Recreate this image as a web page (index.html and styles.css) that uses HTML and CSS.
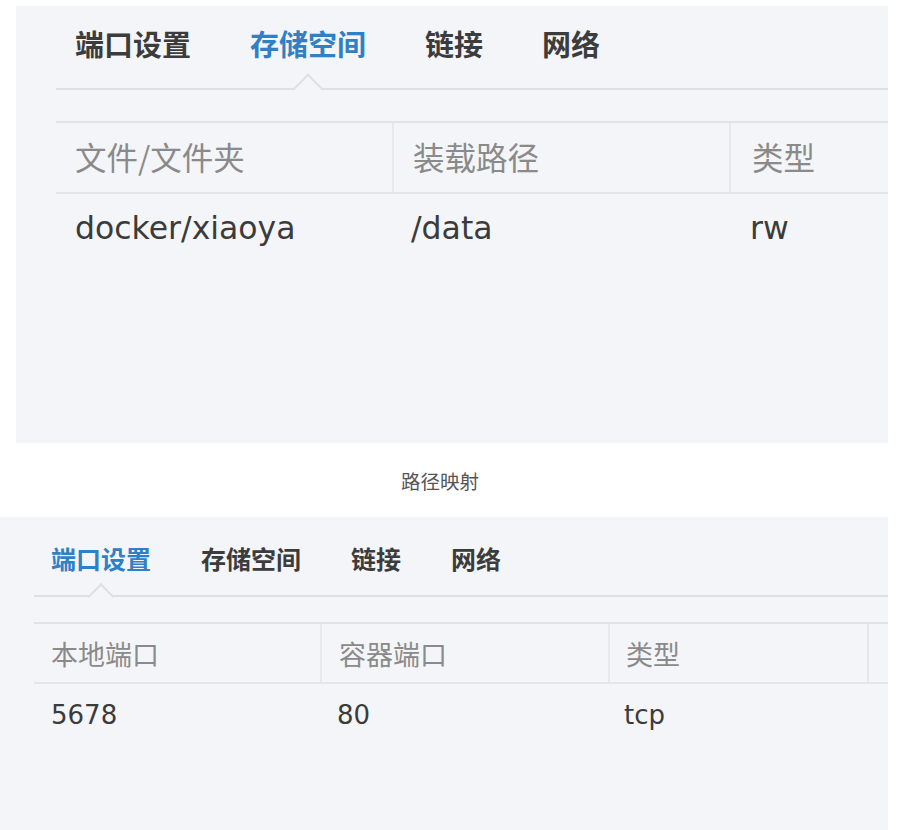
FILE: index.html
```html
<!DOCTYPE html>
<html lang="zh-CN">
<head>
<meta charset="utf-8">
<title>路径映射</title>
<link rel="stylesheet" href="styles.css">
</head>
<body>
<div class="page">
  <section class="panel panel-top">
    <nav class="tabs">
      <span class="tab">端口设置</span>
      <span class="tab active">存储空间</span>
      <span class="tab">链接</span>
      <span class="tab">网络</span>
    </nav>
    <div class="table">
      <div class="row head">
        <div class="cell">文件/文件夹</div>
        <div class="cell">装载路径</div>
        <div class="cell">类型</div>
      </div>
      <div class="row data">
        <div class="cell">docker/xiaoya</div>
        <div class="cell">/data</div>
        <div class="cell">rw</div>
      </div>
    </div>
  </section>

  <div class="caption">路径映射</div>

  <section class="panel panel-bottom">
    <nav class="tabs">
      <span class="tab active">端口设置</span>
      <span class="tab">存储空间</span>
      <span class="tab">链接</span>
      <span class="tab">网络</span>
    </nav>
    <div class="table">
      <div class="row head">
        <div class="cell">本地端口</div>
        <div class="cell">容器端口</div>
        <div class="cell">类型</div>
        <div class="cell"></div>
      </div>
      <div class="row data">
        <div class="cell">5678</div>
        <div class="cell">80</div>
        <div class="cell">tcp</div>
        <div class="cell"></div>
      </div>
    </div>
  </section>
</div>
</body>
</html>
```

FILE: styles.css
```css
* { box-sizing: border-box; }

html, body {
  margin: 0;
  padding: 0;
  background: #ffffff;
}

body {
  font-family: "DejaVu Sans", "Noto Sans CJK SC", sans-serif;
  color: #3a3a3a;
  width: 898px;
  height: 830px;
  overflow: hidden;
}

.page {
  display: flex;
  flex-direction: column;
}

.panel {
  background: #f4f5f8;
}

/* ---------- top screenshot ---------- */
.panel-top {
  margin: 6px 10px 0 16px;
  height: 437px;
  padding-left: 40px;
}

.tabs {
  display: flex;
  border-bottom: 2px solid #dcdfe4;
}

.tab {
  position: relative;
  font-family: "Noto Sans CJK SC", sans-serif;
  font-weight: 700;
  color: #3c3c3c;
  line-height: 1.2;
}

.tab.active {
  color: #2f80c5;
}

.tab.active::after {
  content: "";
  position: absolute;
  left: 50%;
  background: #f4f5f8;
  border-top: 2px solid #dcdfe4;
  border-left: 2px solid #dcdfe4;
  transform: translateX(-50%) rotate(45deg);
}

.panel-top .tabs {
  height: 84px;
  padding: 20px 0 0 19px;
  gap: 59px;
}

.panel-top .tab {
  font-size: 29px;
}

.panel-top .tab.active::after {
  width: 20px;
  height: 20px;
  top: 52px;
}

.table {
  border-top: 2px solid #dfe2e6;
}

.row {
  display: grid;
  align-items: center;
}

.row.head {
  border-bottom: 2px solid #e3e5e9;
  color: #8a8a8a;
}

.row.head .cell + .cell {
  border-left: 2px solid #e6e8eb;
}

.cell {
  height: 100%;
  display: flex;
  align-items: center;
  white-space: nowrap;
}

.panel-top .table {
  margin-top: 31px;
}

.panel-top .row {
  grid-template-columns: 336px 337px 1fr;
}

.panel-top .row.head {
  height: 71px;
  font-size: 31.5px;
}

.panel-top .row.head .cell {
  font-family: "Noto Sans CJK SC", sans-serif;
  padding-bottom: 3px;
}

.panel-top .row.data {
  height: 72px;
  font-size: 31.5px;
  color: #3b3b3b;
}

.panel-top .row.data .cell {
  padding-bottom: 4px;
}

.panel-top .cell {
  padding-left: 19px;
}

.panel-top .cell:nth-child(3) {
  padding-left: 21px;
}

/* ---------- caption ---------- */
.caption {
  height: 74px;
  display: flex;
  align-items: center;
  justify-content: center;
  font-family: "Noto Sans CJK SC", sans-serif;
  font-size: 19.5px;
  color: #555555;
  padding-right: 18px;
}

/* ---------- bottom screenshot ---------- */
.panel-bottom {
  margin-right: 10px;
  height: 313px;
  padding-left: 34px;
}

.panel-bottom .tabs {
  height: 80px;
  padding: 26px 0 0 17px;
  gap: 50px;
}

.panel-bottom .tab {
  font-size: 25px;
}

.panel-bottom .tab.active::after {
  width: 17px;
  height: 17px;
  top: 44px;
}

.panel-bottom .table {
  margin-top: 25px;
}

.panel-bottom .row {
  grid-template-columns: 286px 288px 259px 1fr;
}

.panel-bottom .row.head {
  height: 60px;
  font-size: 27px;
  font-family: "Noto Sans CJK SC", sans-serif;
}

.panel-bottom .row.data {
  height: 62px;
  font-size: 26px;
  color: #3b3b3b;
}

.panel-bottom .cell {
  padding-left: 17px;
}

.panel-bottom .cell:nth-child(3) {
  padding-left: 16px;
}
```
